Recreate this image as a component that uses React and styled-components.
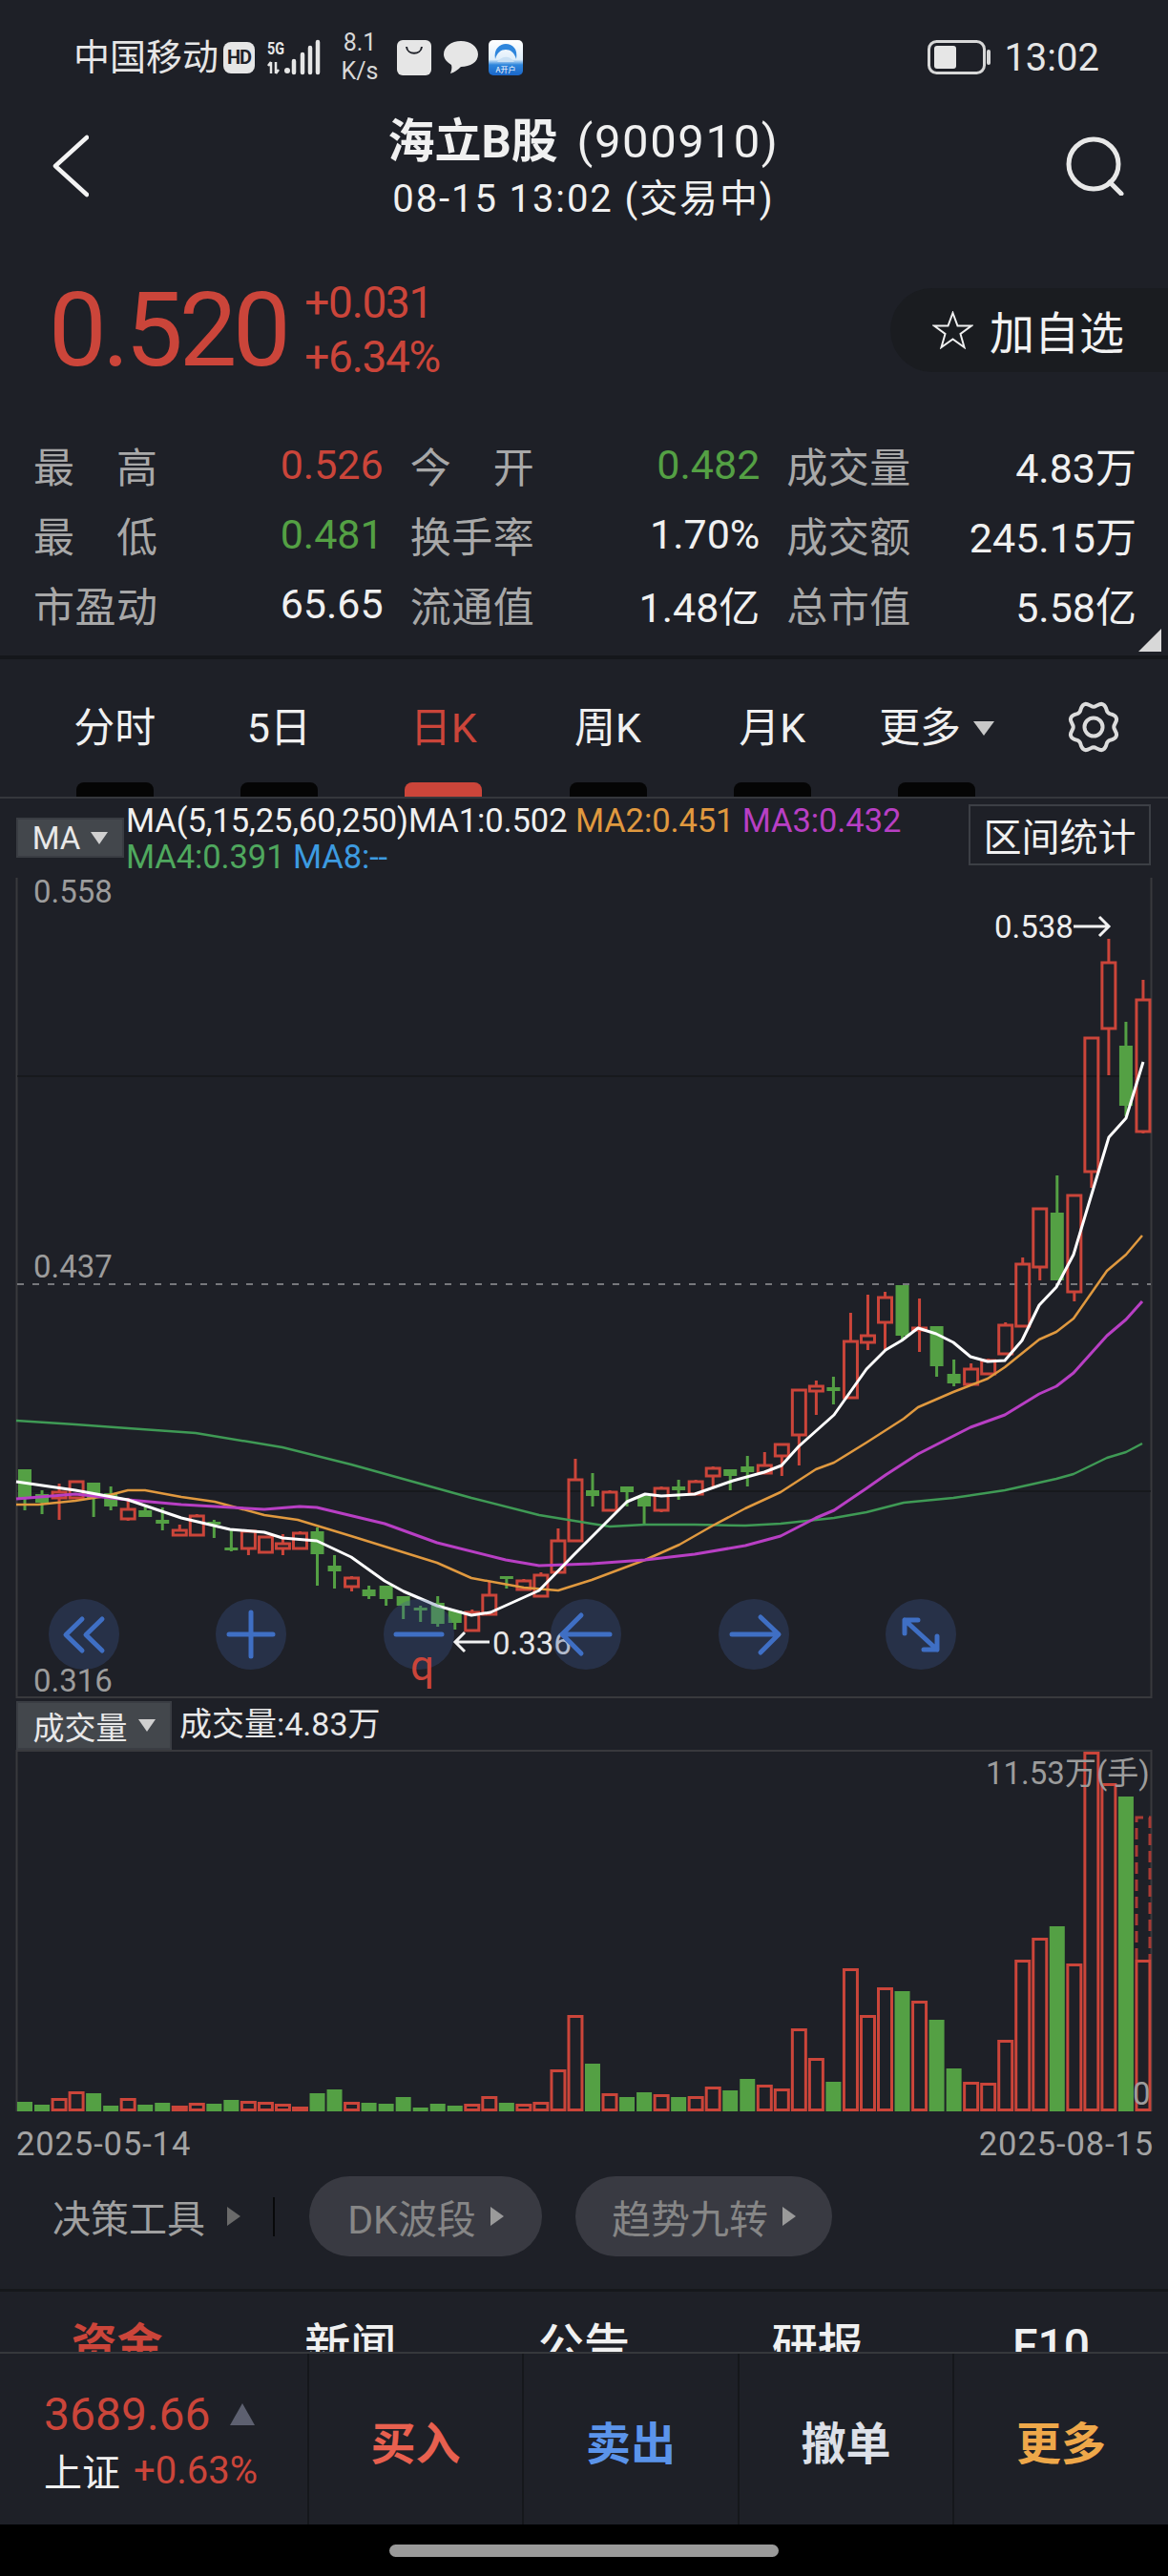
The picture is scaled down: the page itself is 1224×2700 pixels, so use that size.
import React from 'react'
import styled, { createGlobalStyle } from 'styled-components'

const FONT = `Roboto, "Noto Sans CJK SC", sans-serif`
const BG = '#1e2027'
const RED = '#cb453a'
const GREEN = '#54a044'

const GlobalStyle = createGlobalStyle`
html, body {
    margin: 0;
    padding: 0;
    background: ${BG};
}
* { box-sizing: border-box; }
`

const Page = styled.div`
width: 1224px;
height: 2700px;
overflow: hidden;
background: ${BG};
color: #f0f0f0;
font-family: ${FONT};
font-variant-ligatures: none;
`
const Tri = styled.i`
display: inline-block;
flex: none;
width: 0;
height: 0;
border-style: solid;
border-color: transparent;
${p => p.$dir === 'right' ? `
    border-width: ${p.$h / 2}px 0 ${p.$h / 2}px ${p.$w}px;
    border-left-color: ${p.$color};
` : p.$dir === 'up' ? `
    border-width: 0 ${p.$w / 2}px ${p.$h}px ${p.$w / 2}px;
    border-bottom-color: ${p.$color};
    margin-left: ${p.$ml || 0}px;
` : `
    border-width: ${p.$h}px ${p.$w / 2}px 0 ${p.$w / 2}px;
    border-top-color: ${p.$color};
`}
`

/* status bar */
const StatusBar = styled.div`
height: 100px;
padding: 20px 72px 0 77px;
display: flex;
align-items: center;
color: #e6e6e6;
`
const Carrier = styled.span`
font-size: 38px;
line-height: 40px;
margin-right: 5px;
`
const HdBadge = styled.span`
width: 33px;
height: 33px;
border-radius: 8px;
background: #e6e6e6;
color: ${BG};
font-size: 20px;
font-weight: 700;
letter-spacing: -1px;
display: flex;
align-items: center;
justify-content: center;
margin-right: 12px;
`
const SignalIcon = styled.svg`
display: block;
overflow: visible;
`
const NetSpeed = styled.span`
width: 40px;
margin: 0 19px 0 20px;
font-size: 25px;
line-height: 30px;
text-align: center;
color: #d8d8d8;
`
const Clock = styled.span`
font-size: 40px;
margin-left: 13px;
`
const StatusRight = styled.div`
margin-left: auto;
display: flex;
align-items: center;
`
const AppIcon = styled.svg`
display: block;
margin-left: ${p => p.$ml || 0}px;
`

/* nav */
const NavBar = styled.div`
height: 140px;
padding: 18px 46px 0 45px;
display: grid;
grid-template-columns: 1fr auto 1fr;
align-items: center;
`
const NavIcon = styled.svg`
display: block;
margin-bottom: 10px;
justify-self: ${p => p.$end ? 'end' : 'start'};
margin-left: ${p => p.$end ? '0' : '10px'};
`
const TitleBlock = styled.div`
display: flex;
flex-direction: column;
align-items: center;
`
const Title = styled.div`
font-size: 49px;
line-height: 60px;
letter-spacing: 1.6px;
white-space: pre;
b { font-weight: 700; letter-spacing: 0; margin-right: 6px; }
`
const SubTitle = styled.div`
font-size: 40px;
line-height: 60px;
letter-spacing: 1.9px;
white-space: pre;
`

/* price */
const PriceRow = styled.div`
height: 211px;
padding-left: 51px;
display: flex;
align-items: center;
`
const BigPrice = styled.div`
font-size: 108px;
font-weight: 400;
line-height: 114px;
letter-spacing: -4.4px;
color: ${RED};
`
const Change = styled.div`
margin-left: 19px;
font-size: 46px;
line-height: 57px;
letter-spacing: -1.3px;
color: ${RED};
`
const WatchButton = styled.div`
margin-left: auto;
width: 291px;
height: 88px;
border-radius: 44px 0 0 44px;
background: #1a1c20;
padding-left: 44px;
display: flex;
align-items: center;
gap: 17px;
font-size: 47px;
color: #f2f2f2;
`

/* quote grid */
const Stats = styled.div`
position: relative;
height: 236px;
padding: 0 33px 0 35px;
display: grid;
grid-template-columns: repeat(3, 1fr);
grid-auto-rows: 73px;
column-gap: 28px;
`
const Stat = styled.div`
display: flex;
align-items: center;
justify-content: space-between;
font-size: 43px;
margin-top: -2px;
`
const StatLabel = styled.span`
width: 130px;
color: #a8a8a8;
text-align: justify;
text-align-last: justify;
white-space: nowrap;
`
const StatValue = styled.span`
color: ${p => p.$color || '#f0f0f0'};
`
const CornerMark = styled.div`
position: absolute;
right: 7px;
bottom: 4px;
width: 24px;
height: 24px;
background: #d8d8d8;
clip-path: polygon(100% 0, 100% 100%, 0 100%);
`
const Rule = styled.div`
height: ${p => p.$h}px;
background: ${p => p.$color};
`

/* period tabs */
const PeriodBar = styled.div`
height: 144px;
padding-left: 34px;
display: flex;
`
const PeriodTab = styled.div`
width: 172.3px;
display: flex;
flex-direction: column;
align-items: center;
justify-content: space-between;
padding-top: 48px;
font-size: 43px;
line-height: 48px;
color: ${p => p.$active ? RED : '#f0f0f0'};
`
const TabLabel = styled.span`
display: flex;
align-items: center;
gap: 13px;
`
const TabMark = styled.span`
width: 81px;
height: 15px;
border-radius: 8px 8px 0 0;
background: ${p => p.$active ? RED : '#050505'};
`
const GearSlot = styled.div`
width: 156px;
padding-top: 44px;
display: flex;
justify-content: center;
`

/* MA legend */
const LegendRow = styled.div`
height: 83px;
padding-left: 17px;
display: flex;
align-items: flex-start;
`
const Selector = styled.div`
width: ${p => p.$w}px;
height: ${p => p.$h}px;
margin-top: ${p => p.$mt}px;
border: 2px solid #3a3d43;
background: #43474c;
color: #e8e8e8;
font-size: ${p => p.$fs}px;
display: flex;
align-items: center;
justify-content: center;
gap: 11px;
flex: none;
`
const Legend = styled.div`
margin: 4px 0 0 2px;
font-size: 34.5px;
line-height: 38px;
letter-spacing: -0.1px;
white-space: pre;
`
const MaText = styled.span`
color: ${p => p.$color};
margin-left: ${p => p.$ml || 0}px;
`
const RangeButton = styled.div`
margin: 6px 18px 0 auto;
width: 191px;
height: 64px;
border: 2px solid #3c3f45;
font-size: 40px;
display: flex;
align-items: center;
justify-content: center;
flex: none;
`

/* charts */
const ChartPanel = styled.div`
position: relative;
height: ${p => p.$h}px;
`
const ChartSvg = styled.svg`
display: block;
`
const ChartLabel = styled.span`
position: absolute;
left: ${p => p.$x}px;
top: ${p => p.$y}px;
font-size: ${p => p.$fs || 33}px;
line-height: 40px;
color: ${p => p.$color || '#9c9c9c'};
`
const RoundButtons = styled.div`
position: absolute;
left: 51px;
top: 756px;
display: flex;
gap: 101.4px;
`
const RoundButton = styled.svg`
display: block;
width: 74px;
height: 74px;
border-radius: 50%;
background: rgba(62, 90, 150, 0.3);
fill: none;
stroke: #3f6fc4;
stroke-width: 5;
stroke-linecap: round;
stroke-linejoin: round;
`
const VolumeHeader = styled.div`
height: 54px;
padding-left: 17px;
display: flex;
align-items: flex-start;
`
const VolumeText = styled.span`
margin-left: 8px;
font-size: 34px;
line-height: 54px;
color: #e8e8e8;
`

/* dates + tools */
const DateRow = styled.div`
height: 68px;
padding: 0 15px 0 17px;
display: flex;
align-items: center;
justify-content: space-between;
font-size: 34.5px;
letter-spacing: 0.9px;
color: #a4a4a4;
`
const ToolRow = styled.div`
height: 84px;
margin-bottom: 34px;
padding-left: 55px;
display: flex;
align-items: center;
`
const ToolTitle = styled.span`
display: flex;
align-items: center;
gap: 23px;
font-size: 40px;
color: #a0a0a0;
`
const ToolDivider = styled.span`
width: 2px;
height: 41px;
margin: 0 36px 0 34px;
background: #08090a;
`
const ToolPill = styled.span`
width: ${p => p.$w}px;
height: 84px;
margin-right: 35px;
border-radius: 42px;
background: #393a42;
color: #868686;
font-size: 41px;
display: flex;
align-items: center;
justify-content: center;
gap: 15px;
`

/* cut off info tabs */
const InfoTabs = styled.div`
height: 63px;
overflow: hidden;
display: grid;
grid-template-columns: repeat(5, 1fr);
padding-top: 33px;
font-size: 48px;
line-height: 48px;
text-align: center;
`
const InfoTab = styled.span`
color: ${p => p.$active ? RED : '#f0f0f0'};
font-weight: ${p => p.$active ? 700 : 500};
`

/* bottom action bar */
const ActionBar = styled.div`
height: 179px;
display: grid;
grid-template-columns: 322px 225px 226px 225px 226px;
`
const IndexCell = styled.div`
padding: 6px 0 0 46px;
display: flex;
flex-direction: column;
justify-content: center;
`
const IndexLine = styled.div`
height: 59px;
display: flex;
align-items: center;
font-size: ${p => p.$fs}px;
color: ${p => p.$color || '#f0f0f0'};
`
const Action = styled.div`
border-left: 2px solid #15171b;
display: flex;
align-items: center;
justify-content: center;
padding-top: 1px;
font-size: 47px;
font-weight: 700;
color: ${p => p.$color};
`
const HomeArea = styled.div`
height: 54px;
background: #000;
padding-top: 21px;
display: flex;
justify-content: center;
`
const HomePill = styled.div`
width: 408px;
height: 13px;
border-radius: 7px;
background: #9a9a9a;
`

const STATS = [
    ['最高', '0.526', RED], ['今开', '0.482', GREEN], ['成交量', '4.83万'],
    ['最低', '0.481', GREEN], ['换手率', '1.70%'], ['成交额', '245.15万'],
    ['市盈动', '65.65'], ['流通值', '1.48亿'], ['总市值', '5.58亿'],
]
const PERIODS = ['分时', '5日', '日K', '周K', '月K', '更多']

// bodyTop, bodyBottom, wickTop, wickBottom, colour
const CANDLES = [
    [1540, 1570, 1540, 1583, 'g'], [1566, 1575, 1562, 1587, 'g'], [1564, 1570, 1555, 1593, 'r'], [1553, 1570, 1553, 1570, 'r'],
    [1554, 1570, 1554, 1590, 'g'], [1565, 1579, 1558, 1583, 'g'], [1582, 1592, 1570, 1594, 'r'], [1583, 1590, 1577, 1590, 'g'],
    [1593, 1597, 1580, 1604, 'g'], [1604, 1609, 1598, 1609, 'r'], [1589, 1609, 1587, 1609, 'r'], [1595, 1598, 1593, 1612, 'g'],
    [1622, 1625, 1603, 1626, 'g'], [1605, 1623, 1605, 1630, 'r'], [1611, 1627, 1611, 1627, 'r'], [1618, 1623, 1608, 1630, 'r'],
    [1607, 1623, 1605, 1623, 'r'], [1605, 1629, 1601, 1662, 'g'], [1641, 1647, 1630, 1665, 'g'], [1654, 1663, 1652, 1668, 'r'],
    [1666, 1673, 1662, 1676, 'g'], [1662, 1676, 1662, 1683, 'g'], [1673, 1683, 1673, 1697, 'g'], [1685, 1688, 1683, 1700, 'g'],
    [1680, 1702, 1673, 1705, 'g'], [1688, 1701, 1688, 1708, 'g'], [1690, 1709, 1687, 1709, 'r'], [1672, 1692, 1658, 1692, 'r'],
    [1652, 1655, 1652, 1665, 'g'], [1657, 1666, 1655, 1666, 'r'], [1651, 1673, 1648, 1673, 'r'], [1615, 1648, 1602, 1648, 'r'],
    [1551, 1615, 1529, 1615, 'r'], [1562, 1568, 1544, 1579, 'g'], [1564, 1583, 1562, 1583, 'r'], [1558, 1564, 1558, 1579, 'g'],
    [1568, 1579, 1566, 1597, 'g'], [1560, 1583, 1558, 1585, 'r'], [1558, 1562, 1551, 1572, 'g'], [1553, 1566, 1551, 1566, 'r'],
    [1539, 1547, 1537, 1558, 'r'], [1540, 1547, 1540, 1562, 'g'], [1537, 1543, 1526, 1558, 'g'], [1536, 1544, 1522, 1544, 'r'],
    [1514, 1526, 1514, 1547, 'r'], [1457, 1504, 1457, 1536, 'r'], [1453, 1458, 1447, 1483, 'r'], [1454, 1458, 1443, 1472, 'g'],
    [1406, 1465, 1376, 1465, 'r'], [1400, 1407, 1357, 1415, 'r'], [1360, 1386, 1354, 1415, 'r'], [1347, 1400, 1347, 1405, 'g'],
    [1392, 1394, 1361, 1417, 'r'], [1390, 1432, 1390, 1443, 'g'], [1440, 1450, 1425, 1453, 'g'], [1435, 1451, 1429, 1451, 'r'],
    [1426, 1440, 1424, 1440, 'r'], [1389, 1419, 1386, 1419, 'r'], [1325, 1390, 1318, 1390, 'r'], [1267, 1328, 1267, 1342, 'r'],
    [1271, 1342, 1232, 1342, 'g'], [1253, 1354, 1253, 1364, 'r'], [1088, 1228, 1088, 1245, 'r'], [1009, 1078, 984, 1127, 'r'],
    [1096, 1159, 1071, 1170, 'g'], [1048, 1186, 1027, 1188, 'r'],
]
const MA_LINES = [
    ['#3f9a55', 2.5, '17,1489 79,1493 134,1497 205,1502 296,1517 368,1535 458,1560 494,1570 565,1588 620,1597 639,1600 676,1598 728,1598 781,1599 818,1597 874,1591 908,1585 947,1575 999,1570 1053,1562 1107,1550 1125,1545 1160,1528 1180,1522 1197,1513'],
    ['#e0993f', 2.5, '17,1577 40,1577 79,1573 111,1568 134,1562 152,1562 190,1569 225,1574 277,1588 312,1593 368,1610 458,1638 494,1654 549,1664 585,1667 620,1656 676,1635 712,1619 747,1599 781,1581 818,1564 855,1540 874,1533 908,1512 947,1487 962,1475 999,1459 1035,1445 1053,1433 1089,1404 1107,1396 1125,1382 1160,1332 1180,1315 1197,1295'],
    ['#b83fc4', 3, '17,1571 79,1566 134,1572 190,1577 277,1582 314,1579 332,1580 403,1597 458,1617 530,1635 565,1641 620,1639 676,1635 728,1629 781,1620 818,1610 855,1591 874,1583 908,1560 928,1546 962,1524 1017,1496 1053,1483 1089,1461 1107,1453 1125,1439 1160,1400 1180,1383 1197,1364'],
    ['#ffffff', 3, '17,1553 79,1562 134,1572 190,1591 241,1603 277,1606 296,1612 332,1615 368,1632 403,1657 423,1668 458,1683 494,1693 514,1690 565,1667 601,1630 620,1611 657,1574 676,1566 693,1568 728,1566 768,1552 801,1543 819,1536 837,1516 874,1483 908,1435 928,1415 945,1405 962,1392 981,1398 999,1407 1017,1422 1035,1427 1053,1426 1071,1405 1089,1368 1107,1349 1125,1315 1143,1255 1162,1192 1180,1172 1198,1113'],
]
// bar top in the volume panel, positive or negative day
const VOLUMES = [
    [2203, 'g'], [2206, 'g'], [2199, 'r'], [2192, 'r'], [2194, 'g'], [2207, 'g'], [2199, 'r'], [2206, 'g'], [2204, 'g'], [2207, 'r'],
    [2204, 'r'], [2205, 'g'], [2201, 'g'], [2202, 'r'], [2203, 'r'], [2205, 'r'], [2208, 'r'], [2194, 'g'], [2190, 'g'], [2203, 'r'],
    [2204, 'g'], [2205, 'g'], [2198, 'g'], [2209, 'g'], [2205, 'g'], [2207, 'g'], [2205, 'r'], [2197, 'r'], [2204, 'g'], [2205, 'r'],
    [2203, 'r'], [2169, 'r'], [2112, 'r'], [2163, 'g'], [2194, 'r'], [2198, 'g'], [2193, 'g'], [2195, 'r'], [2198, 'g'], [2197, 'r'],
    [2187, 'r'], [2191, 'g'], [2179, 'g'], [2185, 'r'], [2189, 'r'], [2126, 'r'], [2157, 'r'], [2182, 'g'], [2063, 'r'], [2112, 'r'],
    [2083, 'r'], [2087, 'g'], [2097, 'r'], [2117, 'g'], [2168, 'g'], [2182, 'r'], [2183, 'r'], [2138, 'r'], [2054, 'r'], [2031, 'r'],
    [2019, 'g'], [2058, 'r'], [1836, 'r'], [1869, 'r'], [1883, 'g'], [2054, 'r'],
]
const candleX = i => 26 + 18.03 * i

function gearPath() {
    const pts = []
    for (let i = 0; i < 96; i++) {
        const a = (i / 96) * Math.PI * 2
        const r = 23.5 - 2.2 * Math.cos(a * 8)
        pts.push(`${(27 + r * Math.sin(a)).toFixed(1)},${(27 - r * Math.cos(a)).toFixed(1)}`)
    }
    return `M${pts.join('L')}Z`
}

function Candle({ data, index }) {
    const [top, bottom, wickTop, wickBottom, kind] = data
    const x = candleX(index)
    if (kind === 'g') {
        return (
            <g fill={GREEN}>
                <rect x={x - 1.5} y={wickTop} width="3" height={wickBottom - wickTop} />
                <rect x={x - 7} y={top} width="14" height={bottom - top} />
            </g>
        )
    }
    return (
        <g fill={RED}>
            {wickTop < top && <rect x={x - 1.5} y={wickTop} width="3" height={top - wickTop} />}
            {wickBottom > bottom && <rect x={x - 1.5} y={bottom} width="3" height={wickBottom - bottom} />}
            <rect x={x - 7} y={top} width="14" height={bottom - top} fill="none" stroke={RED} strokeWidth="3" />
        </g>
    )
}

function KlineChart() {
    return (
        <ChartPanel $h={860}>
            <ChartSvg width="1224" height="860" viewBox="0 920 1224 860">
                <path d="M17.5 920V1779H1206.5V920" fill="none" stroke="#38393d" strokeWidth="2" />
                <path d="M18 1128H1206M18 1563H1206" stroke="#16171b" strokeWidth="1.5" />
                <path d="M18 1346H1206" stroke="#77787c" strokeWidth="2" strokeDasharray="7 9" />
                {CANDLES.map((c, i) => <Candle key={i} data={c} index={i} />)}
                {MA_LINES.map(([color, w, pts]) => (
                    <polyline key={color} points={pts} fill="none" stroke={color} strokeWidth={w} strokeLinejoin="round" />
                ))}
                <path d="M1125 971H1161M1152 961L1162 971L1152 981M513 1721H478M487 1711L477 1721L487 1731" fill="none" stroke="#f2f2f2" strokeWidth="3" />
            </ChartSvg>
            <ChartLabel $x={35} $y={-5}>0.558</ChartLabel>
            <ChartLabel $x={35} $y={388}>0.437</ChartLabel>
            <ChartLabel $x={35} $y={822}>0.316</ChartLabel>
            <ChartLabel $x={1042} $y={32} $color="#eeeeee">0.538</ChartLabel>
            <ChartLabel $x={516} $y={783} $color="#e6e6e6">0.336</ChartLabel>
            <RoundButtons>
                <RoundButton viewBox="0 0 74 74"><path d="M35 21L18 37.5L35 54M56 21L39 37.5L56 54" /></RoundButton>
                <RoundButton viewBox="0 0 74 74"><path d="M14 37H60M37 14V60" /></RoundButton>
                <RoundButton viewBox="0 0 74 74"><path d="M13 37H61" /></RoundButton>
                <RoundButton viewBox="0 0 74 74"><path d="M12 37H62M32 17L12 37L32 57" /></RoundButton>
                <RoundButton viewBox="0 0 74 74"><path d="M14 37H62M44 19L63 37L44 56" /></RoundButton>
                <RoundButton viewBox="0 0 74 74"><path d="M20 22L54 53M20 36V22H34M54 39V53H40" /></RoundButton>
            </RoundButtons>
            <ChartLabel $x={430} $y={806} $fs={44} $color={RED}>q</ChartLabel>
        </ChartPanel>
    )
}

function VolumeChart() {
    return (
        <ChartPanel $h={379}>
            <ChartSvg width="1224" height="379" viewBox="0 1834 1224 379">
                <path d="M17.5 2213V1835H1206.5V2213" fill="none" stroke="#38393d" strokeWidth="2" />
                {VOLUMES.map(([top, kind], i) => {
                    const x = candleX(i)
                    return kind === 'g'
                        ? <rect key={i} x={x - 8} y={top} width="16" height={2213 - top} fill={GREEN} />
                        : <rect key={i} x={x - 7} y={top + 1.5} width="14" height={2213 - top - 3} fill="none" stroke={RED} strokeWidth="3" />
                })}
                <path d="M1191 2054V1905H1205V2054" fill="none" stroke="#a83a34" strokeWidth="3" strokeDasharray="12 6" />
            </ChartSvg>
            <ChartLabel $x={1033} $y={5}>11.53万(手)</ChartLabel>
            <ChartLabel $x={1187} $y={341}>0</ChartLabel>
        </ChartPanel>
    )
}

export default function App() {
    return (
        <Page>
            <GlobalStyle />
            <StatusBar>
                <Carrier>中国移动</Carrier>
                <HdBadge>HD</HdBadge>
                <SignalIcon width="58" height="36" viewBox="278 42 58 36">
                    <text x="279" y="57" fontSize="18" fontWeight="700" fontFamily="Roboto" fill="#e6e6e6" textLength="18" lengthAdjust="spacingAndGlyphs">5G</text>
                    <path d="M283 65V77M280 69L283 65M288 65V77M288 77L291 73" stroke="#e6e6e6" strokeWidth="2.5" fill="none" />
                    <circle cx="300" cy="74" r="3" fill="#e6e6e6" />
                    <path d="M307 64V76M316 57V76M324 50V76M332 44V76" stroke="#e6e6e6" strokeWidth="4.5" strokeLinecap="round" />
                </SignalIcon>
                <NetSpeed>8.1<br />K/s</NetSpeed>
                <svg width="36" height="37" viewBox="0 0 36 37">
                    <rect width="36" height="37" rx="6" fill="#e6e6e6" />
                    <path d="M10 7C11 16 25 16 26 7" fill="none" stroke="#1e2027" strokeWidth="2" />
                </svg>
                <AppIcon $ml={13} width="36" height="34" viewBox="0 0 36 34">
                    <path d="M18 0C28 0 36 6 36 14C36 22 28 27 18 27C15 30 11 33 7 34C8 31 9 28 8 25C3 22 0 18 0 14C0 6 8 0 18 0Z" fill="#e6e6e6" />
                </AppIcon>
                <AppIcon $ml={11} width="36" height="37" viewBox="0 0 36 37">
                    <defs>
                        <linearGradient id="appBlue" x1="0" y1="0" x2="0" y2="1">
                            <stop offset="0" stopColor="#ffffff" />
                            <stop offset="0.55" stopColor="#dfeefa" />
                            <stop offset="0.7" stopColor="#2f86dc" />
                            <stop offset="1" stopColor="#1a66c8" />
                        </linearGradient>
                    </defs>
                    <rect width="36" height="37" rx="5" fill="url(#appBlue)" />
                    <path d="M7 20C5 9 12 4 18 4C25 4 31 9 29 20C27 13 23 10 18 10C13 10 9 13 7 20Z" fill="#2f86dc" />
                    <path d="M9 23C13 17 22 15 27 23Z" fill="#c9e0f4" />
                    <text x="18" y="34" fontSize="8" textAnchor="middle" fontFamily="Noto Sans CJK SC" fill="#ffffff">A开户</text>
                </AppIcon>
                <StatusRight>
                    <svg width="67" height="36" viewBox="0 0 67 36">
                        <rect x="1.5" y="1.5" width="58" height="33" rx="8" fill="none" stroke="#d8d8d8" strokeWidth="3" />
                        <rect x="7" y="6" width="23" height="24" rx="3" fill="#e6e6e6" />
                        <rect x="62" y="10" width="4" height="16" rx="2" fill="#d8d8d8" />
                    </svg>
                    <Clock>13:02</Clock>
                </StatusRight>
            </StatusBar>

            <NavBar>
                <NavIcon width="38" height="66" viewBox="0 0 38 66" fill="none" stroke="#f4f4f4" strokeWidth="4.5" strokeLinecap="round" strokeLinejoin="round">
                    <path d="M36 3L3 33L36 63" />
                </NavIcon>
                <TitleBlock>
                    <Title><b>海立B股</b> (900910)</Title>
                    <SubTitle>08-15 13:02 (交易中)</SubTitle>
                </TitleBlock>
                <NavIcon $end width="61" height="62" viewBox="0 0 61 62" fill="none" stroke="#e8e8e8" strokeWidth="5" strokeLinecap="round">
                    <circle cx="29" cy="29" r="26" />
                    <path d="M46 48L58 60" />
                </NavIcon>
            </NavBar>

            <PriceRow>
                <BigPrice>0.520</BigPrice>
                <Change>+0.031<br />+6.34%</Change>
                <WatchButton>
                    <svg width="43" height="40" viewBox="0 0 43 40" fill="none" stroke="#f0f0f0" strokeWidth="2" strokeLinejoin="miter">
                        <path d="M21.5 2L26.5 15.5H41L29.5 24L33.5 38L21.5 29.5L9.5 38L13.5 24L2 15.5H16.5Z" />
                    </svg>
                    加自选
                </WatchButton>
            </PriceRow>

            <Stats>
                {STATS.map(([label, value, color]) => (
                    <Stat key={label}>
                        <StatLabel>{label}</StatLabel>
                        <StatValue $color={color}>{value}</StatValue>
                    </Stat>
                ))}
                <CornerMark />
            </Stats>
            <Rule $h={4} $color="#15171b" />

            <PeriodBar>
                {PERIODS.map(name => (
                    <PeriodTab key={name} $active={name === '日K'}>
                        <TabLabel>
                            {name}
                            {name === '更多' && <Tri $w={22} $h={15} $color="#c8c8c8" />}
                        </TabLabel>
                        <TabMark $active={name === '日K'} />
                    </PeriodTab>
                ))}
                <GearSlot>
                    <svg width="54" height="54" viewBox="0 0 54 54" fill="none" stroke="#dcdcdc" strokeWidth="4">
                        <path d={gearPath()} />
                        <circle cx="27" cy="27" r="9.5" />
                    </svg>
                </GearSlot>
            </PeriodBar>
            <Rule $h={2} $color="#35373c" />

            <LegendRow>
                <Selector $w={113} $h={42} $mt={20} $fs={33}>MA<Tri $w={19} $h={13} $color="#d0d0d0" /></Selector>
                <Legend>
                    MA(5,15,25,60,250)MA1:0.502 <MaText $color="#e0993f">MA2:0.451</MaText> <MaText $color="#b83fc4">MA3:0.432</MaText>
                    {'\n'}
                    <MaText $color="#4fa85e">MA4:0.391</MaText> <MaText $color="#3d9be0">MA8:--</MaText>
                </Legend>
                <RangeButton>区间统计</RangeButton>
            </LegendRow>

            <KlineChart />

            <VolumeHeader>
                <Selector $w={163} $h={51} $mt={3} $fs={33}>成交量<Tri $w={19} $h={13} $color="#d0d0d0" /></Selector>
                <VolumeText>成交量:4.83万</VolumeText>
            </VolumeHeader>
            <VolumeChart />

            <DateRow>
                <span>2025-05-14</span>
                <span>2025-08-15</span>
            </DateRow>
            <ToolRow>
                <ToolTitle>决策工具<Tri $dir="right" $w={14} $h={20} $color="#6a6a6a" /></ToolTitle>
                <ToolDivider />
                <ToolPill $w={244}>DK波段<Tri $dir="right" $w={14} $h={20} $color="#9a9a9a" /></ToolPill>
                <ToolPill $w={269}>趋势九转<Tri $dir="right" $w={14} $h={20} $color="#9a9a9a" /></ToolPill>
            </ToolRow>
            <Rule $h={3} $color="#15171b" />

            <InfoTabs>
                <InfoTab $active>资金</InfoTab>
                <InfoTab>新闻</InfoTab>
                <InfoTab>公告</InfoTab>
                <InfoTab>研报</InfoTab>
                <InfoTab>F10</InfoTab>
            </InfoTabs>
            <Rule $h={2} $color="#36383c" />

            <ActionBar>
                <IndexCell>
                    <IndexLine $fs={48} $color={RED}>3689.66<Tri $dir="up" $w={27} $h={23} $color="#5d6070" $ml={20} /></IndexLine>
                    <IndexLine $fs={40}>上证<MaText $color={RED} $ml={14}>+0.63%</MaText></IndexLine>
                </IndexCell>
                <Action $color="#e8604f">买入</Action>
                <Action $color="#5b94ea">卖出</Action>
                <Action $color="#dde0e8">撤单</Action>
                <Action $color="#eea84a">更多</Action>
            </ActionBar>
            <HomeArea><HomePill /></HomeArea>
        </Page>
    )
}
